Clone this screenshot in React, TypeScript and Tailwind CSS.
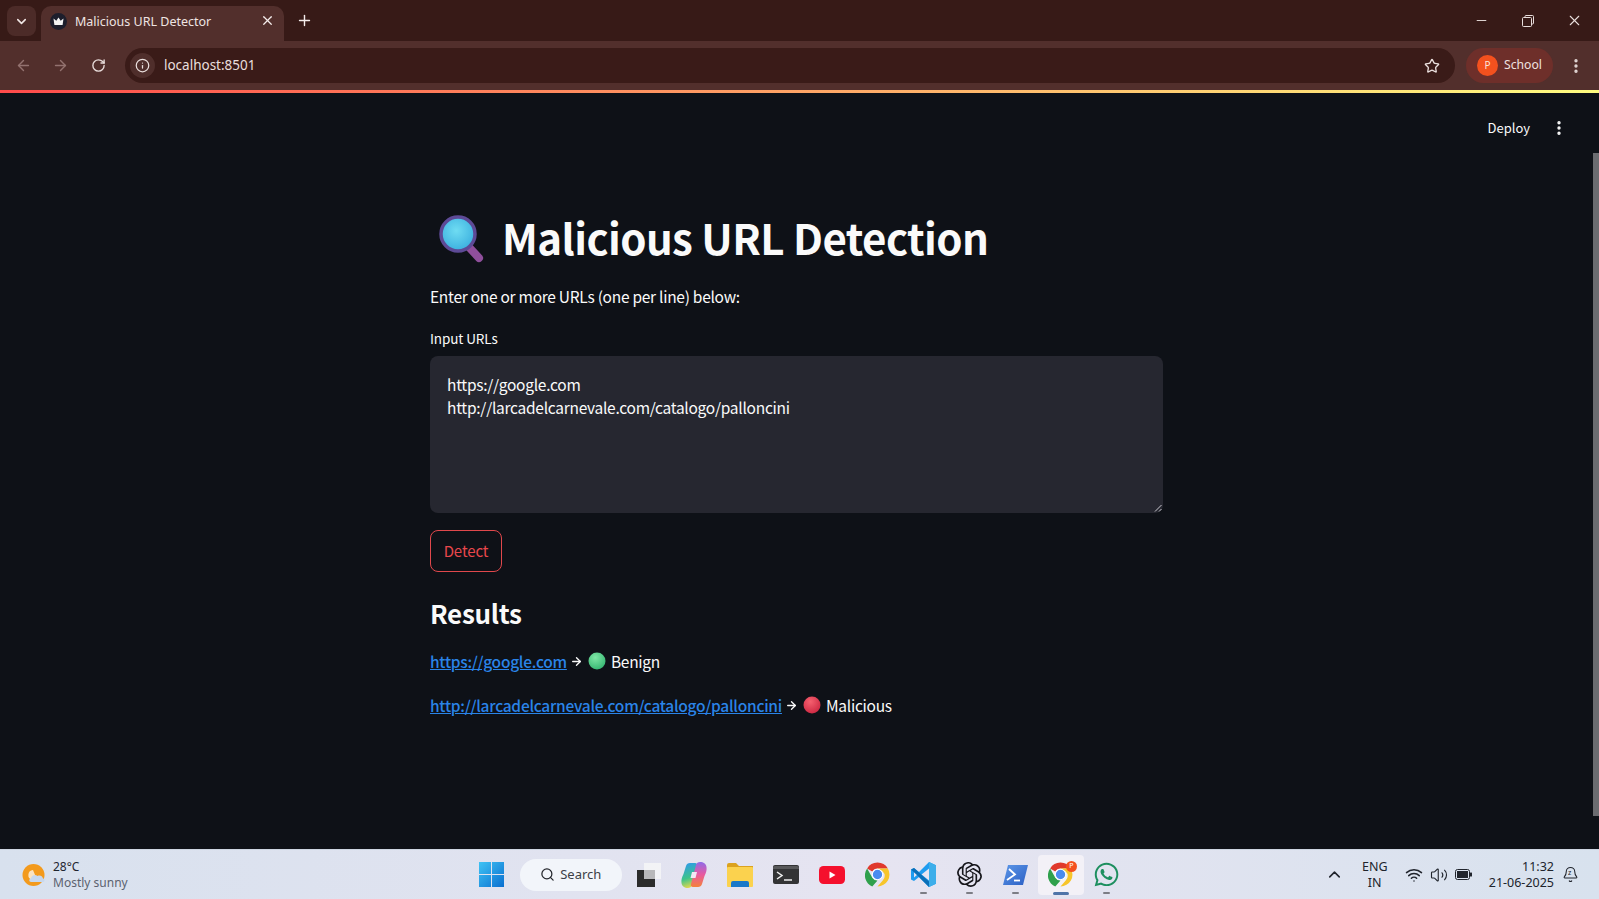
import React from "react";
import {
  ArrowLeft,
  ArrowRight,
  Bell,
  ChevronDown,
  ChevronUp,
  EllipsisVertical,
  Info,
  Minus,
  Plus,
  RotateCw,
  Search,
  Star,
  Volume2,
  Wifi,
  X,
} from "lucide-react";
import { FaWhatsapp } from "react-icons/fa";
import { SiOpenai } from "react-icons/si";

const ui = "font-['Noto_Sans','Liberation_Sans',sans-serif]";
const app = "font-['Noto_Sans_CJK_SC','Noto_Sans',sans-serif]";

const CrownFavicon = () => (
  <svg width="17" height="17" viewBox="0 0 17 17">
    <circle cx="8.5" cy="8.5" r="8.5" fill="#1d1e2c" />
    <path d="M3.5 5.5l2.8 2.3 2.2-3.3 2.2 3.3 2.8-2.3-.9 6.5H4.4z" fill="#f4f4f4" />
  </svg>
);

const RestoreIcon = () => (
  <svg width="12" height="12" viewBox="0 0 12 12" fill="none" stroke="#e8dedc" strokeWidth="1">
    <rect x="0.5" y="2.5" width="9" height="9" rx="1" />
    <path d="M3 2.5V1.5a1 1 0 0 1 1-1h6.5a1 1 0 0 1 1 1V8a1 1 0 0 1-1 1h-1" />
  </svg>
);

const ResizeGrip = () => (
  <svg width="8" height="8" viewBox="0 0 8 8" stroke="#c9c9cf" strokeWidth="1">
    <path d="M1 7.5L7.5 1M5 7.5L7.5 5" />
  </svg>
);

const MagnifierEmoji = () => (
  <svg width="50" height="50" viewBox="0 0 50 50">
    <defs>
      <radialGradient id="glass" cx="0.45" cy="0.4" r="0.7">
        <stop offset="0" stopColor="#6fdcf2" />
        <stop offset="1" stopColor="#33a9dc" />
      </radialGradient>
    </defs>
    <path d="M31 31l12 13" stroke="#8f4f9c" strokeWidth="8" strokeLinecap="round" />
    <circle cx="22" cy="20" r="17" fill="url(#glass)" stroke="#5d4a96" strokeWidth="3.5" />
  </svg>
);

const Ball = ({ id, light, dark }: { id: string; light: string; dark: string }) => (
  <svg width="18" height="18" viewBox="0 0 18 18" className="mx-[5px] shrink-0">
    <defs>
      <radialGradient id={id} cx="0.4" cy="0.3" r="0.8">
        <stop offset="0" stopColor={light} />
        <stop offset="1" stopColor={dark} />
      </radialGradient>
    </defs>
    <circle cx="9" cy="9" r="8.5" fill={`url(#${id})`} />
  </svg>
);

const WeatherIcon = () => (
  <svg width="24" height="24" viewBox="0 0 24 24">
    <circle cx="11.5" cy="12" r="11" fill="#f39a1c" />
    <path d="M11 7a5 5 0 0 0-1 9.8h5" fill="#fbe3c0" />
    <path d="M9 19c-2 0-2.500-3 0-3.500C9.500 12.500 13 11 15.500 13c2.500-1 5 0 5.500 2.500 2 .5 2 3.500 0 3.500z" fill="#c7d8ee" />
  </svg>
);

const WindowsLogo = () => (
  <svg width="25" height="25" viewBox="0 0 25 25">
    <defs>
      <linearGradient id="win" x1="0" y1="0" x2="1" y2="1">
        <stop offset="0" stopColor="#3fc3f4" />
        <stop offset="1" stopColor="#0a6fd0" />
      </linearGradient>
    </defs>
    <path d="M0 0h12v12H0zM13 0h12v12H13zM0 13h12v12H0zM13 13h12v12H13z" fill="url(#win)" />
  </svg>
);

const TaskView = () => (
  <svg width="25" height="24" viewBox="0 0 25 24">
    <rect x="1" y="7" width="18" height="17" fill="#2b2b2b" />
    <rect x="8" y="0" width="17" height="16" fill="#f4f4f6" opacity="0.9" />
    <rect x="8" y="7" width="11" height="9" fill="#b8b8ba" />
  </svg>
);

const Copilot = () => (
  <svg width="26" height="26" viewBox="0 0 26 26">
    <defs>
      <linearGradient id="cpA" x1="0.3" y1="0" x2="0.5" y2="1">
        <stop offset="0" stopColor="#2f9be8" />
        <stop offset="0.6" stopColor="#3ec48a" />
        <stop offset="1" stopColor="#e8d84a" />
      </linearGradient>
      <linearGradient id="cpB" x1="0.5" y1="0" x2="0.5" y2="1">
        <stop offset="0" stopColor="#8f6be8" />
        <stop offset="0.5" stopColor="#e85aa0" />
        <stop offset="1" stopColor="#f4823a" />
      </linearGradient>
    </defs>
    <path d="M9 1h5c2 0 2.500 1.500 2 3L11 23c-.5 2-2 3-4 3-3.500 0-6-1.500-6.500-5-.5-3 .5-6 2-9L5 4c.5-2 2-3 4-3z" fill="url(#cpA)" />
    <path d="M17 25h-5c-2 0-2.500-1.500-2-3l5-19c.5-2 2-3 4-3 3.500 0 6 1.500 6.500 5 .5 3-.5 6-2 9L21 22c-.5 2-2 3-4 3z" fill="url(#cpB)" />
    <path d="M11 10h5l-1.500 6h-5z" fill="#f2e8f4" />
  </svg>
);

const Folder = () => (
  <svg width="26" height="24" viewBox="0 0 26 24">
    <path d="M0 2a2 2 0 0 1 2-2h7l3 3h14v4H0z" fill="#dba21f" />
    <rect x="0" y="4" width="26" height="20" rx="1" fill="#fbd24e" />
    <path d="M4 24v-4a2 2 0 0 1 2-2h14a2 2 0 0 1 2 2v4z" fill="#1a78c9" />
  </svg>
);

const Terminal = () => (
  <svg width="26" height="20" viewBox="0 0 26 20">
    <rect width="26" height="19" rx="2" fill="#333335" />
    <path d="M0 3a2 2 0 0 1 2-2h22a2 2 0 0 1 2 2v1H0z" fill="#58585a" />
    <path d="M4 7l5 3.500-5 3.500" stroke="#f1f1f1" strokeWidth="1.500" fill="none" />
    <path d="M11 15h8" stroke="#f1f1f1" strokeWidth="1.500" />
  </svg>
);

const YouTube = () => (
  <svg width="26" height="18" viewBox="0 0 26 18">
    <rect width="26" height="18" rx="4.500" fill="#f5102d" />
    <path d="M10.500 5.500l6 3.500-6 3.500z" fill="#fff" />
  </svg>
);

const ChromeLogo = ({ size = 25 }: { size?: number }) => (
  <svg width={size} height={size} viewBox="0 0 48 48">
    <path d="M24 1a23 23 0 0 1 19.900 11.500H24a11.500 11.500 0 0 0-10 5.800L4.100 12.500A23 23 0 0 1 24 1z" fill="#e0392c" />
    <path d="M4.100 12.500L14 30a11.500 11.500 0 0 0 10 5.500L14 47A23 23 0 0 1 4.100 12.500z" fill="#2fa04c" />
    <path d="M43.900 12.500A23 23 0 0 1 24 47l10-11.500A11.500 11.500 0 0 0 34 18.300l-10-5.800z" fill="#f7c52b" />
    <circle cx="24" cy="24" r="10" fill="#4a8bf0" stroke="#fff" strokeWidth="2" />
  </svg>
);

const VsCode = () => (
  <svg width="25" height="25" viewBox="0 0 25 25">
    <path d="M18 0l7 3.300v18.400L18 25 8 15l-5 4-3-1.500v-10L3 6l5 4z" fill="#1f9cf0" />
    <path d="M18 0l7 3.300v18.400L18 25z" fill="#3daeea" />
    <path d="M18 6.500L10.500 12.500l7.500 6z" fill="#e6e4f1" />
    <path d="M3 9.500v6l3.500-3z" fill="#e6e4f1" />
    <path d="M0 7.500L3 6l15 13.500V25L8 15z" fill="#0a6fb8" />
  </svg>
);

const PowerShell = () => (
  <svg width="25" height="20" viewBox="0 0 25 20">
    <defs>
      <linearGradient id="ps" x1="0" y1="0" x2="1" y2="1">
        <stop offset="0" stopColor="#5d97e8" />
        <stop offset="1" stopColor="#2a5fc4" />
      </linearGradient>
    </defs>
    <path d="M5 0h20l-5 20H0z" fill="url(#ps)" />
    <path d="M6 4l6 5.500-8 5.500" stroke="#fff" strokeWidth="1.800" fill="none" />
    <path d="M11 15.500h6" stroke="#fff" strokeWidth="1.800" />
  </svg>
);

const BatteryIcon = () => (
  <svg width="17" height="11" viewBox="0 0 17 11">
    <rect x="0.5" y="0.5" width="14" height="10" rx="2" fill="none" stroke="#20242c" />
    <rect x="2" y="2" width="11" height="7" fill="#20242c" />
    <rect x="15" y="3.500" width="2" height="4" rx="0.5" fill="#20242c" />
  </svg>
);

const Taskbar = () => {
  const dot = <span className="absolute bottom-[1px] h-[2px] w-[7px] rounded-full bg-[#7c7d85]" />;
  const cell = "relative flex h-[40px] w-[45.8px] items-center justify-center";

  return (
    <footer className={`${ui} flex h-[50px] shrink-0 items-center border-t border-[#cdd5e2] bg-[linear-gradient(90deg,#d8e1ee,#e6e4f1_55%,#d8e2ee)]`}>
      <div className="flex w-[469px] items-center gap-[7px] pl-[22px]">
        <WeatherIcon />
        <div className="text-[12px] leading-[16px]">
          <div className="text-[#1f2530]">28°C</div>
          <div className="text-[#5c6270]">Mostly sunny</div>
        </div>
      </div>

      <div className="flex items-center">
        <div className={cell}><WindowsLogo /></div>
        <div className="ml-[5px] mr-[4px] flex h-[32px] w-[102px] items-center justify-center gap-[5px] rounded-full bg-[#f2f5fa] text-[13px] text-[#3c3f47]">
          <Search size={15} strokeWidth={2} color="#23252b" />
          <span>Search</span>
        </div>
        <div className={cell}><TaskView /></div>
        <div className={cell}><Copilot /></div>
        <div className={cell}><Folder /></div>
        <div className={cell}><Terminal /></div>
        <div className={cell}><YouTube /></div>
        <div className={cell}><ChromeLogo /></div>
        <div className={cell}><VsCode />{dot}</div>
        <div className={cell}><SiOpenai size={25} color="#17171c" />{dot}</div>
        <div className={cell}><PowerShell />{dot}</div>
        <div className={`${cell} rounded-[4px] bg-[#f3f1f7]`}>
          <ChromeLogo />
          <span className="absolute right-[7px] top-[6px] flex h-[11px] w-[11px] items-center justify-center rounded-full bg-[#f4511e] text-[7px] text-white">P</span>
          <span className="absolute bottom-0 h-[3px] w-[16px] rounded-full bg-[#4f74a8]" />
        </div>
        <div className={cell}><FaWhatsapp size={27} color="#1d8f5f" />{dot}</div>
      </div>

      <div className="ml-auto flex items-center pr-[20px] text-[#20242c]">
        <ChevronUp size={19} strokeWidth={2} />
        <div className="ml-[10px] w-[42px] text-center text-[12.500px] leading-[16px]">
          <div>ENG</div>
          <div>IN</div>
        </div>
        <Wifi size={18} className="ml-[9px]" />
        <Volume2 size={18} strokeWidth={1.500} className="ml-[7px]" />
        <div className="ml-[7px] flex"><BatteryIcon /></div>
        <div className="ml-[17px] text-right text-[12.500px] leading-[16px]">
          <div>11:32</div>
          <div>21-06-2025</div>
        </div>
        <div className="relative ml-[8px]">
          <Bell size={17} strokeWidth={1.500} />
          <span className="absolute left-[6px] top-[2px] text-[7px] leading-[9px]">z</span>
        </div>
      </div>
    </footer>
  );
};

const BrowserChrome = () => (
  <header className={`${ui} shrink-0`}>
    <div className="flex h-[41px] items-end bg-[#371a17] pl-[7px]">
      <div className="mb-[5px] flex h-[30px] w-[29px] items-center justify-center rounded-[8px] bg-[#4c2b28] text-[#f1e7e5]">
        <ChevronDown size={15} strokeWidth={2.500} />
      </div>
      <div className="ml-[5px] flex h-[35px] w-[243px] items-start rounded-t-[10px] bg-[#522f2c] pl-[9px] pr-[9px] pt-[7px] text-[12.500px] leading-[17px] text-[#efe4e2]">
        <CrownFavicon />
        <span className="ml-[8px]">Malicious URL Detector</span>
        <X size={15} strokeWidth={2} className="ml-auto text-[#f5edec]" />
      </div>
      <Plus size={17} strokeWidth={2} className="mb-[12px] ml-[12px] text-[#f5edec]" />
      <div className="mb-[12px] ml-auto flex items-center text-[#e8dedc]">
        <Minus size={15} strokeWidth={1.500} />
        <div className="ml-[33px]"><RestoreIcon /></div>
        <X size={17} strokeWidth={1.500} className="ml-[32px] mr-[16px]" />
      </div>
    </div>

    <div className="flex h-[49px] items-center bg-[#522f2c] pl-[15px] pr-[14px]">
      <ArrowLeft size={17} strokeWidth={2} className="text-[#93726f]" />
      <ArrowRight size={17} strokeWidth={2} className="ml-[20px] text-[#93726f]" />
      <RotateCw size={15} strokeWidth={2.200} className="ml-[22px] text-[#e8dcda]" />
      <div className="ml-[19px] flex h-[35px] w-[1331px] items-center rounded-full bg-[#3a1b18] pl-[5px] pr-[15px] text-[13.500px]">
        <span className="flex h-[25px] w-[25px] items-center justify-center rounded-full bg-[#4f2e2b] text-[#eadfdd]">
          <Info size={15} strokeWidth={2} />
        </span>
        <span className="ml-[9px] text-[#e9dfdd]">localhost:8501</span>
        <Star size={16} strokeWidth={2} className="ml-auto text-[#eadfdd]" />
      </div>
      <div className="ml-[11px] flex h-[35px] w-[87px] items-center rounded-full bg-[#6e2f2a] pl-[11px] text-[12.200px] text-[#efe2e0]">
        <span className="flex h-[21px] w-[21px] items-center justify-center rounded-full bg-[#f4511e] text-[10px] text-[#fbe5dc]">P</span>
        <span className="ml-[6px]">School</span>
      </div>
      <EllipsisVertical size={18} strokeWidth={2.500} className="ml-[14px] text-[#e3d8d6]" />
    </div>

    <div className="h-[3px] bg-[linear-gradient(90deg,#ff4b4b,#fffd80)]" />
  </header>
);

const results = [
  { url: "https://google.com", label: "Benign", id: "ballGreen", light: "#7fe7a6", dark: "#2fb26d" },
  {
    url: "http://larcadelcarnevale.com/catalogo/palloncini",
    label: "Malicious",
    id: "ballRed",
    light: "#f5606f",
    dark: "#c9233e",
  },
];

export default function App() {
  return (
    <div className="flex h-[899px] w-[1599px] flex-col overflow-hidden bg-[#0e1117]">
      <BrowserChrome />

      <main className={`${app} relative min-h-0 flex-1 text-[#fafafa]`}>
        <div className="flex h-[70px] items-center justify-end pr-[31px] text-[13px]">
          <span>Deploy</span>
          <EllipsisVertical size={18} strokeWidth={2.500} className="ml-[20px]" />
        </div>

        <div className="ml-[430px] w-[733px]">
          <div className="mt-[45px] flex h-[58px] items-center">
            <div className="ml-[6px] mt-[4px]"><MagnifierEmoji /></div>
            <h1 className="ml-[16px] text-[42px] font-bold leading-[58px] tracking-[-0.56px]">Malicious URL Detection</h1>
          </div>

          <p className="mt-[18px] text-[15.500px] leading-[24px] tracking-[-0.27px]">Enter one or more URLs (one per line) below:</p>

          <label className="mt-[20px] block text-[13.500px] leading-[20px] tracking-[-0.12px]">Input URLs</label>
          <div className="relative mt-[8px]">
            <textarea
              readOnly
              value={"https://google.com\nhttp://larcadelcarnevale.com/catalogo/palloncini"}
              className="block h-[157px] w-full resize-none rounded-[8px] bg-[#262730] px-[17px] py-[17px] text-[15.500px] leading-[23px] tracking-[-0.27px] text-[#fafafa] outline-none"
            />
            <div className="absolute bottom-[1px] right-[1px] flex"><ResizeGrip /></div>
          </div>

          <button className="mt-[17px] flex h-[42px] w-[72px] items-center justify-center rounded-[8px] border border-[#e0484c] text-[15px] tracking-[-0.1px] text-[#e8474c]">
            Detect
          </button>

          <h2 className="mt-[21px] text-[26px] font-semibold leading-[40px] tracking-[-0.3px]">Results</h2>

          <div className="mt-[16px] flex flex-col gap-[20px] text-[15.500px] leading-[24px] tracking-[-0.26px]">
            {results.map((r) => (
              <div key={r.url} className="flex items-center">
                <a className="font-medium text-[#2a84e8] underline">{r.url}</a>
                <ArrowRight size={13} strokeWidth={2.500} className="ml-[3px] shrink-0" />
                <Ball id={r.id} light={r.light} dark={r.dark} />
                <span>{r.label}</span>
              </div>
            ))}
          </div>
        </div>

        <div className="absolute right-0 top-[60px] h-[663px] w-[6px] bg-[#6b6c70]" />
      </main>

      <Taskbar />
    </div>
  );
}
